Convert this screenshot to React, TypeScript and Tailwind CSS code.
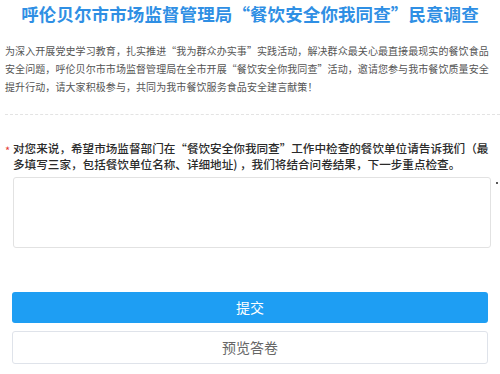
import React from "react";

export default function App() {
  return (
    <div
      className="relative w-[500px] h-[374px] bg-white overflow-hidden"
      style={{ fontFamily: '"Noto Sans CJK SC", "Noto Sans", sans-serif' }}
    >
      <h1 className="text-center text-[17.5px] leading-[28px] font-bold text-[#2f8fe4] tracking-[0.1px]">
        呼伦贝尔市市场监督管理局“餐饮安全你我同查”民意调查
      </h1>
      <p className="mt-[14px] px-[5px] text-[10px] leading-[18px] tracking-[0.08px] text-[#555]">
        为深入开展党史学习教育，扎实推进“我为群众办实事”实践活动，解决群众最关心最直接最现实的餐饮食品安全问题，呼伦贝尔市市场监督管理局在全市开展“餐饮安全你我同查”活动，邀请您参与我市餐饮质量安全提升行动，请大家积极参与，共同为我市餐饮服务食品安全建言献策！
      </p>
      <div className="mt-[18px] ml-[5px] border-t border-dashed border-[#e3e3e3]" />
      <div className="mt-[25px] flex pl-[5px] pr-[8px]">
        <span className="w-[8px] shrink-0 text-[11px] leading-[16px] text-[#e53935] pt-[2px]">*</span>
        <span className="text-[11.6px] leading-[16px] font-medium text-[#2a2a2a]">
          对您来说，希望市场监督部门在“餐饮安全你我同查”工作中检查的餐饮单位请告诉我们（最多填写三家，包括餐饮单位名称、详细地址) ，我们将结合问卷结果，下一步重点检查。
        </span>
      </div>
      <div className="mt-[5px] ml-[13px] w-[478px] h-[71px] rounded-[3px] border border-[#e2e2e2] bg-white" />
      <div className="mt-[44px] mx-[12px] h-[31px] rounded-[3px] bg-[#1e9ef3] flex items-center justify-center text-white text-[14px]">
        提交
      </div>
      <div className="mt-[8px] mx-[12px] h-[33px] rounded-[3px] border border-[#dfe3ea] bg-white flex items-center justify-center text-[#666] text-[14px]">
        预览答卷
      </div>
      <div className="absolute left-[496px] top-[182px] w-[2px] h-[2px] rounded-full bg-[#222]" />
    </div>
  );
}
